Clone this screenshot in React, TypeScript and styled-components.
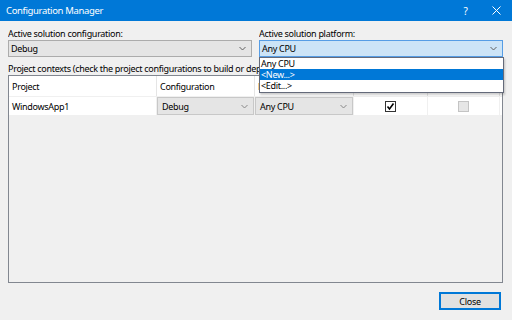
import styled, { createGlobalStyle } from "styled-components";

const GlobalStyle = createGlobalStyle`
  html, body {
    margin: 0;
    padding: 0;
    background: #f0f0f0;
  }
  body {
    font-family: "Noto Sans", "DejaVu Sans", sans-serif;
    font-size: 9px;
    letter-spacing: -0.3px;
    color: #000;
  }
`;

const Chevron = ({ color = "#606060" }: { color?: string }) => (
  <svg width="7" height="5" viewBox="0 0 7 5">
    <polyline points="0.5,1 3.5,4 6.5,1" fill="none" stroke={color} strokeWidth="1" />
  </svg>
);

const CheckMark = () => (
  <svg width="9" height="9" viewBox="0 0 9 9">
    <polyline points="1.5,4.5 3.5,7 7.5,1.5" fill="none" stroke="#000" strokeWidth="1.6" />
  </svg>
);

const App = () => {
  return (
    <Window>
      <GlobalStyle />
      <TitleBar>
        <TitleText>Configuration Manager</TitleText>
        <TitleButtons>
          <TitleButton>?</TitleButton>
          <TitleButton>
            <svg width="9" height="9" viewBox="0 0 9 9">
              <path d="M0.5 0.5 L8.5 8.5 M8.5 0.5 L0.5 8.5" stroke="#fff" strokeWidth="1" />
            </svg>
          </TitleButton>
        </TitleButtons>
      </TitleBar>
      <Body>
        <TopRow>
          <Field>
            <Label>Active solution configuration:</Label>
            <Select>
              <span>Debug</span>
              <Chevron />
            </Select>
          </Field>
          <Field $open>
            <Label>Active solution platform:</Label>
            <Select $active>
              <span>Any CPU</span>
              <Chevron />
            </Select>
            <DropList>
              <DropItem>Any CPU</DropItem>
              <DropItem $selected>&lt;New...&gt;</DropItem>
              <DropItem>&lt;Edit...&gt;</DropItem>
            </DropList>
          </Field>
        </TopRow>
        <Label $gap>
          Project contexts (check the project configurations to build or deploy):
        </Label>
        <Table>
          <HeaderRow>
            <HeadCell>Project</HeadCell>
            <HeadCell>Configuration</HeadCell>
            <HeadCell>Platform</HeadCell>
            <HeadCell $center>Build</HeadCell>
            <HeadCell $center>Deploy</HeadCell>
          </HeaderRow>
          <DataRow>
            <Cell>WindowsApp1</Cell>
            <ComboCell>
              <GridCombo>
                <span>Debug</span>
                <Chevron color="#888" />
              </GridCombo>
            </ComboCell>
            <ComboCell>
              <GridCombo>
                <span>Any CPU</span>
                <Chevron color="#888" />
              </GridCombo>
            </ComboCell>
            <Cell $center>
              <CheckBox>
                <CheckMark />
              </CheckBox>
            </Cell>
            <Cell $center>
              <CheckBox $disabled />
            </Cell>
          </DataRow>
        </Table>
        <Footer>
          <Button>Close</Button>
        </Footer>
      </Body>
    </Window>
  );
};

export default App;

const Window = styled.div`
  width: 512px;
  height: 320px;
  display: flex;
  flex-direction: column;
  background: #f0f0f0;
  overflow: hidden;
`;

const TitleBar = styled.div`
  height: 21px;
  flex-shrink: 0;
  background: #0078d7;
  color: #fff;
  display: flex;
  align-items: center;
  justify-content: space-between;
  padding-left: 6px;
`;

const TitleText = styled.div`
  font-size: 9.5px;
  letter-spacing: -0.35px;
`;

const TitleButtons = styled.div`
  display: flex;
  height: 100%;
`;

const TitleButton = styled.div`
  width: 31px;
  height: 100%;
  display: flex;
  align-items: center;
  justify-content: center;
  font-size: 10px;
`;

const Body = styled.div`
  flex: 1;
  display: flex;
  flex-direction: column;
  padding: 6px 9px 10px 8px;
`;

const TopRow = styled.div`
  display: grid;
  grid-template-columns: 244px 244px;
  column-gap: 7px;
`;

const Field = styled.div<{ $open?: boolean }>`
  display: flex;
  flex-direction: column;
  position: relative;
  z-index: ${({ $open }) => ($open ? 2 : 1)};
`;

const Label = styled.div<{ $gap?: boolean }>`
  height: 13px;
  line-height: 13px;
  margin-top: ${({ $gap }) => ($gap ? "5px" : "0")};
  white-space: nowrap;
  overflow: hidden;
`;

const Select = styled.div<{ $active?: boolean }>`
  height: 17px;
  box-sizing: border-box;
  border: 1px solid ${({ $active }) => ($active ? "#569de5" : "#acacac")};
  background: ${({ $active }) => ($active ? "#cce4f7" : "#e5e5e5")};
  display: flex;
  align-items: center;
  justify-content: space-between;
  padding: 0 5px 0 2px;
`;

const DropList = styled.div`
  position: absolute;
  top: 30px;
  left: 0;
  right: -1px;
  background: #fff;
  border: 1px solid #646a7a;
  box-shadow: 1px 2px 2px rgba(0, 0, 0, 0.2);
  padding-bottom: 1px;
`;

const DropItem = styled.div<{ $selected?: boolean }>`
  height: 11px;
  line-height: 11px;
  padding-left: 1px;
  background: ${({ $selected }) => ($selected ? "#0078d7" : "#fff")};
  color: ${({ $selected }) => ($selected ? "#fff" : "#000")};
`;

const Table = styled.div`
  height: 208px;
  box-sizing: border-box;
  border: 1px solid #828790;
  background: #f0f0f0;
  display: flex;
  flex-direction: column;
`;

const columns = "148px 98px 99px 74px 72px";

const HeaderRow = styled.div`
  display: grid;
  grid-template-columns: ${columns};
  height: 20px;
  background: #fff;
  border-bottom: 1px solid #f0f0f0;
`;

const HeadCell = styled.div<{ $center?: boolean }>`
  display: flex;
  align-items: center;
  justify-content: ${({ $center }) => ($center ? "center" : "flex-start")};
  padding-left: ${({ $center }) => ($center ? "0" : "3px")};
  border-right: 1px solid #e5e5e5;
  white-space: nowrap;
  overflow: hidden;
`;

const DataRow = styled.div`
  display: grid;
  grid-template-columns: ${columns};
  height: 18px;
  background: #fff;
`;

const Cell = styled.div<{ $center?: boolean }>`
  display: flex;
  align-items: center;
  justify-content: ${({ $center }) => ($center ? "center" : "flex-start")};
  padding-left: ${({ $center }) => ($center ? "0" : "3px")};
  border-right: 1px solid #f0f0f0;
`;

const ComboCell = styled.div`
  display: flex;
  border-right: 1px solid #f0f0f0;
`;

const GridCombo = styled.div`
  flex: 1;
  box-sizing: border-box;
  border: 1px solid #c8c8c8;
  background: #e5e5e5;
  display: flex;
  align-items: center;
  justify-content: space-between;
  padding: 0 5px 0 4px;
`;

const CheckBox = styled.div<{ $disabled?: boolean }>`
  width: 11px;
  height: 11px;
  box-sizing: border-box;
  border: 1px solid ${({ $disabled }) => ($disabled ? "#c4c4c4" : "#333")};
  background: ${({ $disabled }) => ($disabled ? "#e6e6e6" : "#fff")};
  display: flex;
  align-items: center;
  justify-content: center;
`;

const Footer = styled.div`
  display: flex;
  justify-content: flex-end;
  margin-top: 9px;
  padding-right: 2px;
`;

const Button = styled.div`
  width: 62px;
  height: 18px;
  box-sizing: border-box;
  border: 1px solid #0078d7;
  box-shadow: inset 0 0 0 1px #0078d7;
  background: #e1e1e1;
  display: flex;
  align-items: center;
  justify-content: center;
`;
